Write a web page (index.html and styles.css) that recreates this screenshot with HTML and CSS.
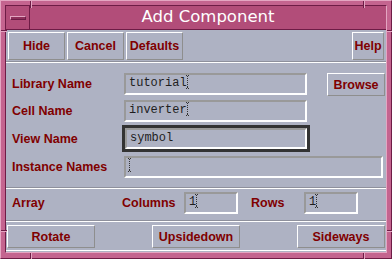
FILE: index.html
```html
<!DOCTYPE html>
<html lang="en">
<head>
    <meta charset="UTF-8">
    <title>Add Component</title>
    <link rel="stylesheet" href="styles.css">
</head>
<body>
    <div class="window">
        <!-- resize handle marks on the frame -->
        <span class="tick tick-v" style="left:29px; top:0"></span>
        <span class="tick tick-v" style="left:362px; top:0"></span>
        <span class="tick tick-v" style="left:29px; top:252px"></span>
        <span class="tick tick-v" style="left:362px; top:252px"></span>
        <span class="tick tick-h" style="left:0; top:29px"></span>
        <span class="tick tick-h" style="left:386px; top:29px"></span>
        <span class="tick tick-h" style="left:0; top:229px"></span>
        <span class="tick tick-h" style="left:386px; top:229px"></span>

        <div class="frame">
            <div class="titlebar">
                <div class="menu-btn"><span class="menu-bar"></span></div>
                <div class="title">Add Component</div>
            </div>

            <div class="content">
                <!-- Top buttons -->
                <div class="toolbar">
                    <button class="btn">Hide</button>
                    <button class="btn">Cancel</button>
                    <button class="btn">Defaults</button>
                    <button class="btn btn-help">Help</button>
                </div>

                <!-- Names -->
                <div class="form">
                    <div class="row">
                        <label class="label">Library Name</label>
                        <div class="field">tutorial<svg class="caret" width="3" height="14" viewBox="0 0 3 14"><path d="M0 0h1v1H0zM2 0h1v1H2zM1 1h1v1H1zM1 3h1v1H1zM1 5h1v1H1zM1 7h1v1H1zM1 9h1v1H1zM1 11h1v1H1zM0 13h1v1H0zM2 13h1v1H2zM1 12h1v1H1z" fill="#333"/></svg></div>
                        <button class="btn btn-browse">Browse</button>
                    </div>
                    <div class="row">
                        <label class="label">Cell Name</label>
                        <div class="field">inverter<svg class="caret" width="3" height="14" viewBox="0 0 3 14"><path d="M0 0h1v1H0zM2 0h1v1H2zM1 1h1v1H1zM1 3h1v1H1zM1 5h1v1H1zM1 7h1v1H1zM1 9h1v1H1zM1 11h1v1H1zM0 13h1v1H0zM2 13h1v1H2zM1 12h1v1H1z" fill="#333"/></svg></div>
                    </div>
                    <div class="row row-focus">
                        <label class="label">View Name</label>
                        <div class="field field-focus">symbol</div>
                    </div>
                    <div class="row">
                        <label class="label">Instance Names</label>
                        <div class="field field-wide"><svg class="caret" width="3" height="14" viewBox="0 0 3 14"><path d="M0 0h1v1H0zM2 0h1v1H2zM1 1h1v1H1zM1 3h1v1H1zM1 5h1v1H1zM1 7h1v1H1zM1 9h1v1H1zM1 11h1v1H1zM0 13h1v1H0zM2 13h1v1H2zM1 12h1v1H1z" fill="#333"/></svg></div>
                    </div>
                </div>

                <!-- Array -->
                <div class="array-row">
                    <label class="label label-array">Array</label>
                    <label class="label label-cols">Columns</label>
                    <div class="field field-small">1<svg class="caret" width="3" height="14" viewBox="0 0 3 14"><path d="M0 0h1v1H0zM2 0h1v1H2zM1 1h1v1H1zM1 3h1v1H1zM1 5h1v1H1zM1 7h1v1H1zM1 9h1v1H1zM1 11h1v1H1zM0 13h1v1H0zM2 13h1v1H2zM1 12h1v1H1z" fill="#333"/></svg></div>
                    <label class="label label-rows">Rows</label>
                    <div class="field field-small">1<svg class="caret" width="3" height="14" viewBox="0 0 3 14"><path d="M0 0h1v1H0zM2 0h1v1H2zM1 1h1v1H1zM1 3h1v1H1zM1 5h1v1H1zM1 7h1v1H1zM1 9h1v1H1zM1 11h1v1H1zM0 13h1v1H0zM2 13h1v1H2zM1 12h1v1H1z" fill="#333"/></svg></div>
                </div>

                <!-- Orientation -->
                <div class="actions">
                    <button class="btn btn-wide">Rotate</button>
                    <button class="btn btn-wide">Upsidedown</button>
                    <button class="btn btn-wide">Sideways</button>
                </div>
            </div>
        </div>
    </div>
</body>
</html>
```

FILE: styles.css
```css
* {
    box-sizing: border-box;
}

body {
    margin: 0;
    font-family: "Liberation Sans", Arial, sans-serif;
    background-color: #c4648f;
}

.window {
    position: relative;
    width: 392px;
    height: 259px;
    padding: 4px 4px 5px 4px;
    background-color: #c4648f;
    border: 1px solid;
    border-color: #e4a6c2 #6e1c46 #6e1c46 #e4a6c2;
}

.tick {
    position: absolute;
    background-color: #6e1c46;
}

.tick-v {
    width: 1px;
    height: 7px;
    box-shadow: 1px 0 0 #e4a6c2;
}

.tick-h {
    width: 6px;
    height: 1px;
    box-shadow: 0 1px 0 #e4a6c2;
}

.frame {
    height: 100%;
    display: flex;
    flex-direction: column;
    border: 1px solid;
    border-color: #6e1c46 #e4a6c2 #e4a6c2 #6e1c46;
}

.titlebar {
    display: flex;
    height: 24px;
    background-color: #b24d79;
    border-bottom: 1px solid #6e1c46;
}

.menu-btn {
    width: 24px;
    border-right: 1px solid #6e1c46;
    display: flex;
    align-items: center;
    justify-content: center;
}

.menu-bar {
    width: 16px;
    height: 4px;
    background-color: #8e2f5a;
    border: 1px solid;
    border-color: #e4a6c2 #6e1c46 #6e1c46 #e4a6c2;
}

.title {
    flex: 1;
    text-align: center;
    color: white;
    font-family: "DejaVu Sans", sans-serif;
    font-size: 16.5px;
    line-height: 22px;
}

.content {
    flex: 1;
    display: flex;
    flex-direction: column;
    background-color: #aeb2c3;
}

.btn {
    font-family: "Liberation Sans", Arial, sans-serif;
    font-weight: bold;
    font-size: 12.5px;
    color: #800000;
    background-color: #aeb2c3;
    border: 1px solid;
    border-color: white #8e8e8e #8e8e8e white;
    padding: 0;
}

.toolbar {
    display: flex;
    gap: 2px;
    padding: 2px 2px 1px;
    border-bottom: 1px solid #8e909c;
    box-shadow: 0 1px 0 white;
    margin-bottom: 1px;
}

.toolbar .btn {
    width: 57px;
    height: 28px;
}

.toolbar .btn-help {
    margin-left: auto;
    width: 32px;
}

.form {
    display: flex;
    flex-direction: column;
    gap: 5px;
    padding: 10px 0 9px 6px;
    border-bottom: 1px solid #8e909c;
    box-shadow: 0 1px 0 white;
    margin-bottom: 1px;
}

.row {
    display: flex;
    align-items: center;
    height: 22px;
}

.row-focus {
    height: 24px;
}

.label {
    width: 112px;
    font-weight: bold;
    font-size: 12.5px;
    color: #800000;
}

.field {
    width: 183px;
    height: 22px;
    border: 2px solid;
    border-color: #999 white white #999;
    padding-left: 3px;
    font-family: "Liberation Mono", monospace;
    font-size: 12px;
    line-height: 17px;
    color: #1e1e1e;
    white-space: nowrap;
}

.field-focus {
    height: 21px;
    align-self: flex-start;
    margin-top: 1px;
    margin-left: 1px;
    width: 182px;
    outline: 3px solid #333;
}

.field-wide {
    width: 259px;
}

.caret {
    vertical-align: -3px;
    margin-left: -1px;
}

.btn-browse {
    width: 58px;
    height: 23px;
    margin-left: 20px;
    align-self: flex-start;
}

.array-row {
    display: flex;
    align-items: center;
    padding: 3px 0 6px 6px;
    border-bottom: 1px solid #8e909c;
    box-shadow: 0 1px 0 white;
    margin-bottom: 1px;
}

.label-array {
    width: 110px;
}

.label-cols {
    width: 62px;
}

.label-rows {
    width: 53px;
    margin-left: 13px;
}

.field-small {
    width: 54px;
}

.actions {
    flex: 1;
    display: flex;
    justify-content: space-between;
    align-items: flex-start;
    padding: 3px 1px 0;
    border-bottom: 1px solid white;
    margin-bottom: 1px;
}

.btn-wide {
    width: 88px;
    height: 23px;
}
```
